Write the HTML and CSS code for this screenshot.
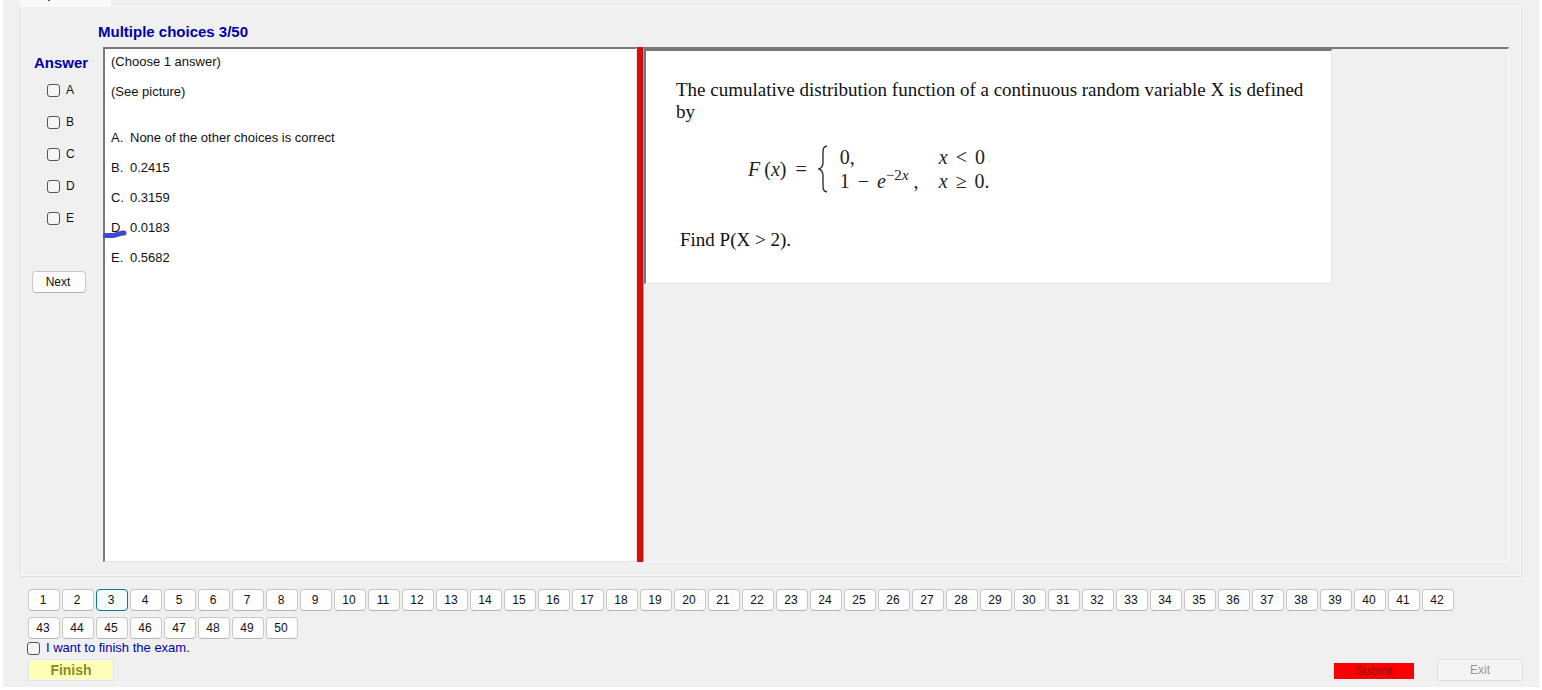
FILE: index.html
```html
<!DOCTYPE html>
<html lang="en">
<head>
<meta charset="utf-8">
<title>Exam</title>
<link rel="stylesheet" href="styles.css">
</head>
<body>
<main class="window">
  <div class="tabs"><div class="tab"><svg class="tab-mark" width="3" height="2" viewBox="0 0 3 2" aria-hidden="true"><path d="M0 0h2v1h-2z" fill="#555"/></svg></div></div>
  <section class="page">
    <h1 class="title">Multiple choices 3/50</h1>
    <div class="body">
      <form class="answers">
        <h2 class="answers-title">Answer</h2>
        <label class="option"><input class="check" type="checkbox">A</label>
        <label class="option"><input class="check" type="checkbox">B</label>
        <label class="option"><input class="check" type="checkbox">C</label>
        <label class="option"><input class="check" type="checkbox">D</label>
        <label class="option"><input class="check" type="checkbox">E</label>
        <button class="button next" type="button">Next</button>
      </form>
      <article class="question">
        <p class="line">(Choose 1 answer)</p>
        <p class="line">(See picture)</p>
        <div class="choices">
          <p class="line"><span class="letter">A.</span>None of the other choices is correct</p>
          <p class="line"><span class="letter">B.</span>0.2415</p>
          <p class="line"><span class="letter">C.</span>0.3159</p>
          <p class="line marked"><span class="letter">D.</span>0.0183
            <svg class="mark" width="24" height="8" viewBox="0 0 24 8" aria-hidden="true"><path d="M2.500 5.500H9C14 5.500 15 3 21 3" fill="none" stroke="#3f48cc" stroke-width="5" stroke-linecap="round"/></svg>
          </p>
          <p class="line"><span class="letter">E.</span>0.5682</p>
        </div>
      </article>
      <div class="splitter"></div>
      <section class="picture-pane">
        <div class="picture">
          <p class="statement">The cumulative distribution function of a continuous random variable X is defined by</p>
          <div class="formula">
            <span><i>F</i><span class="argument">(<i>x</i>)</span><span class="equals">=</span></span>
            <svg class="brace" width="10" height="48" viewBox="0 0 10 48" aria-hidden="true"><path d="M9 1C5 2 5 4 5 8V17C5 21 4 23 1 24C4 25 5 27 5 31V40C5 44 5 46 9 47" fill="none" stroke="#333" stroke-width="1.4"/></svg>
            <div class="cases">
              <span>0,</span><span><i>x</i> <span class="sign">&lt;</span> 0</span>
              <span>1 <span class="sign">−</span> <i>e</i><sup class="power">−2<i>x</i></sup> ,</span><span><i>x</i> <span class="sign">≥</span> 0.</span>
            </div>
          </div>
          <p class="find">Find P(X &gt; 2).</p>
        </div>
      </section>
    </div>
  </section>
  <nav class="numbers" id="numbers" aria-label="Questions"></nav>
  <label class="confirm"><input class="check" type="checkbox">I want to finish the exam.</label>
  <footer class="actions">
    <button class="finish" type="button">Finish</button>
    <button class="submit" type="button" disabled>Submit</button>
    <button class="exit" type="button" disabled>Exit</button>
  </footer>
</main>
<script src="script.js"></script>
</body>
</html>
```
FILE: styles.css
```css
* { box-sizing: border-box; }
body {
  margin: 0;
  background: #fff;
  color: #111;
  font: 13px/16px "Liberation Sans", Arial, sans-serif;
}
h1, h2, p { margin: 0; }
button { font: inherit; color: inherit; padding: 0; }
.window {
  margin: 0 3px 3px;
  padding-bottom: 6px;
  background: #f0f0f0;
}
.tabs { height: 6px; padding-left: 17px; }
.tab {
  width: 91px;
  height: 6px;
  padding-left: 28px;
  background: #fafafa;
  line-height: 0;
}
.tab-mark { display: block; }
.page {
  margin: 0 17px 0 17px;
  padding: 16px 12px 14px 0;
  border: 1px solid #e0e0e0;
  border-top-color: #fafafa;
  box-shadow: inset 1px 0 #fafafa, inset -1px -1px #fafafa;
}
.title, .answers-title { color: #0000a8; font-size: 15px; font-weight: bold; }
.title { padding-left: 77px; margin-bottom: 7px; line-height: 17px; }
.body {
  display: grid;
  grid-template-columns: 82px minmax(0, 534fr) 6px minmax(0, 866fr);
  min-height: 515px;
}
.answers { display: flex; flex-direction: column; align-items: flex-start; }
.answers-title { margin: 8px 0 11px 13px; }
.option {
  display: flex;
  align-items: center;
  gap: 6px;
  height: 16px;
  margin: 0 0 16px 26px;
  font-size: 12px;
}
.check {
  appearance: none;
  width: 13px;
  height: 13px;
  margin: 0;
  border: 1px solid #555;
  border-radius: 3px;
  background: #f6f6f6;
}
.check:checked { background: #005fb8; }
.button {
  border: 1px solid #c8c8c8;
  border-bottom-color: #b4b4b4;
  border-radius: 4px;
  background: #fdfdfd;
  font-size: 12px;
}
.next { width: 54px; height: 22px; margin: 29px 0 0 11px; padding-right: 2px; }
.question {
  padding: 5px 6px;
  background: #fff;
  border: 1px solid #e3e3e3;
  border-top: 2px solid #787878;
  border-left: 2px solid #787878;
}
.line { height: 30px; }
.choices { margin-top: 16px; }
.letter { display: inline-block; width: 19px; }
.marked { position: relative; }
.mark { position: absolute; left: -8px; top: 10px; }
.splitter { background: #e00b0b; border-right: 1px solid #b01818; }
.picture-pane {
  border: 1px solid #fafafa;
  border-top: 2px solid #787878;
  border-left-color: #a0a0a0;
}
.picture {
  width: 688px;
  max-width: 100%;
  padding: 28px 20px 32px 30px;
  background: #fff;
  border: 1px solid #e3e3e3;
  border-top: 2px solid #787878;
  border-left: 2px solid #787878;
  font: 19px/22px "Liberation Serif", "Times New Roman", serif;
}
.formula {
  display: flex;
  align-items: center;
  height: 48px;
  margin: 22px 0 36px 72px;
  font-size: 20px;
  line-height: 24px;
  color: #222;
}
.argument { margin: 0 9px 0 4px; }
.brace { margin: 0 12px 0 11px; }
.cases { display: grid; grid-template-columns: 99px auto; }
.sign { margin: 0 3px; }
.power { font-size: 15px; line-height: 0; }
.find { padding-left: 4px; }
.numbers {
  display: flex;
  flex-wrap: wrap;
  gap: 6px 2px;
  margin: 12px 68px 0 25px;
}
.number { width: 32px; height: 22px; padding-right: 2px; }
.current { border-color: #1f6f94; background: #f3fbff; }
.confirm {
  display: flex;
  align-items: center;
  gap: 6px;
  height: 18px;
  margin: 0 0 0 24px;
  color: #0000a8;
}
.actions { display: flex; align-items: center; margin: 2px 16px 0 25px; }
.finish {
  width: 86px;
  height: 22px;
  border: 2px solid #f8f8e8;
  outline: 1px solid #e4e4e4;
  outline-offset: -1px;
  background: #ffffb8;
  color: #8c8c1c;
  font-size: 14px;
  font-weight: bold;
}
.submit {
  width: 80px;
  height: 16px;
  margin: 2px 23px 0 auto;
  border: 0;
  background: #f00;
  color: #8c1010;
  font-size: 12px;
  line-height: 16px;
}
.exit {
  width: 86px;
  height: 22px;
  border: 1px solid #dedede;
  border-radius: 3px;
  background: #f4f4f4;
  color: #969696;
  font-size: 12px;
}
```
FILE: script.js
```js
const numbers = document.getElementById("numbers");
for (let n = 1; n <= 50; n++) {
  const button = document.createElement("button");
  button.type = "button";
  button.className = n === 3 ? "button number current" : "button number";
  button.textContent = n;
  numbers.append(button);
}
```
